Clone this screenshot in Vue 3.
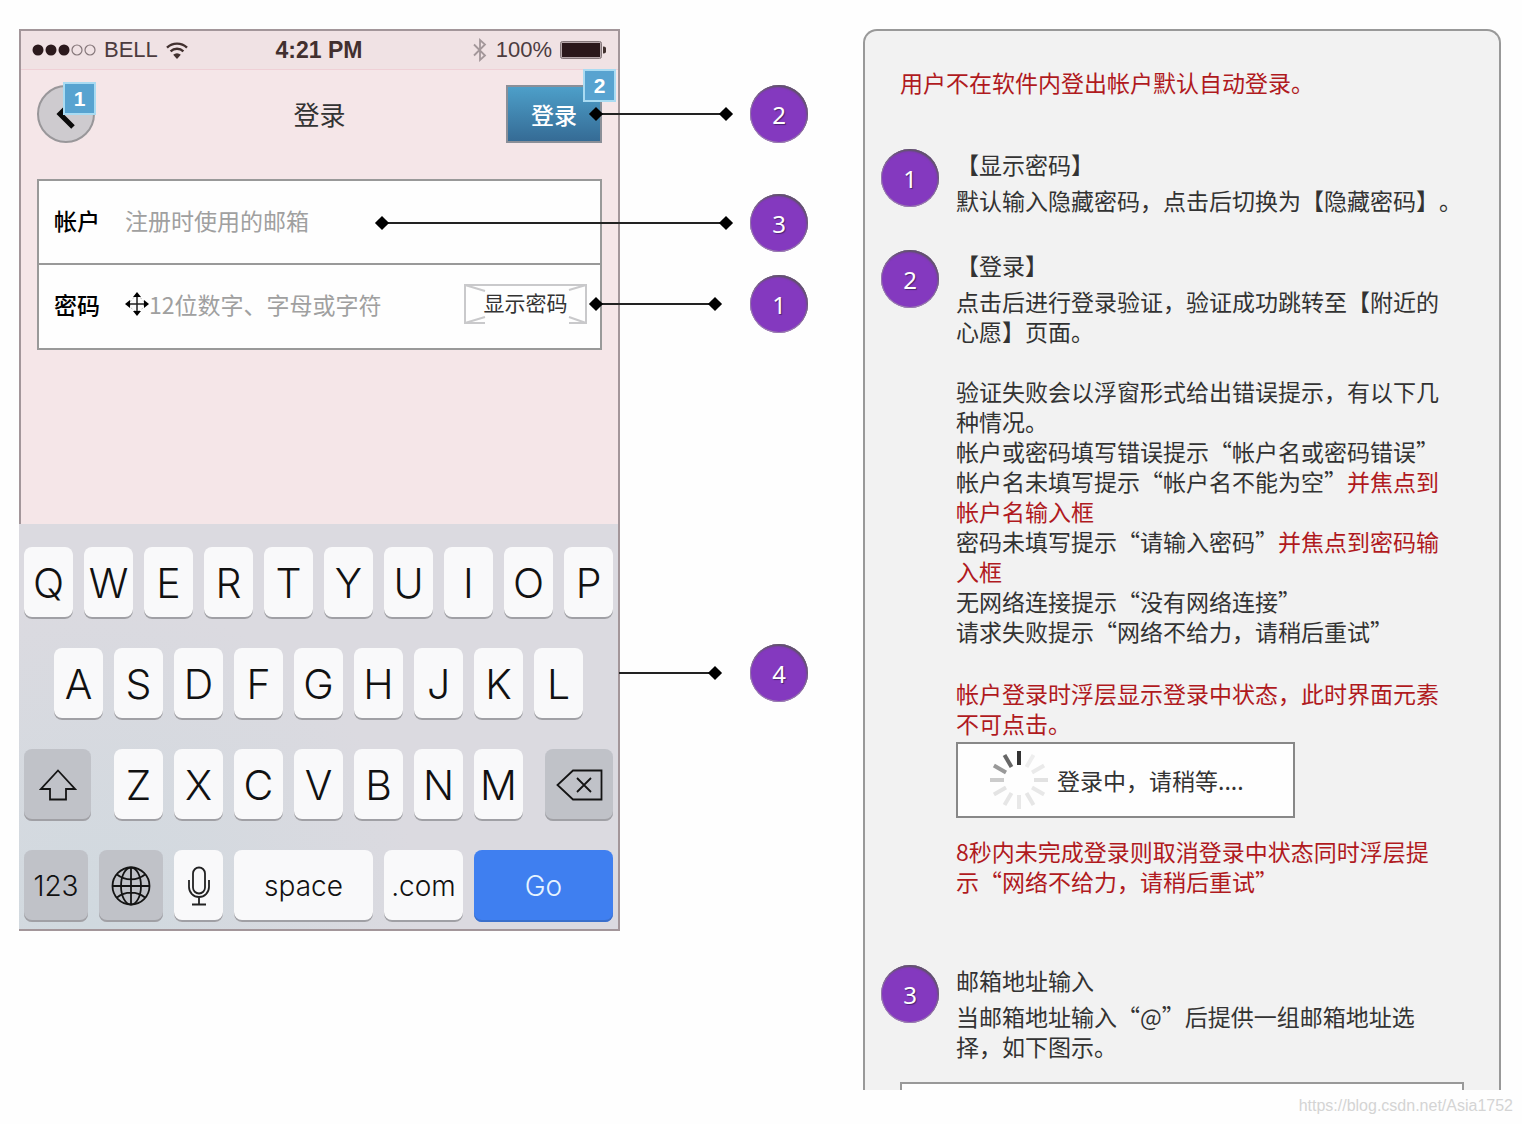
<script setup>
const callouts = [
  { label: '2', slot: 'to-login' },
  { label: '3', slot: 'to-account' },
  { label: '1', slot: 'to-reveal' },
  { label: '4', slot: 'to-keyboard' },
]
const topRow = 'QWERTYUIOP'.split('')
const homeRow = 'ASDFGHJKL'.split('')
const bottomRow = 'ZXCVBNM'.split('')
const spokes = ['#333', '#eee', '#eaeaea', '#e2e2e2', '#e8e8e8', '#e6e6e6', '#e8e8e8', '#e6e6e6', '#e4e4e4', '#ccc', '#999', '#666']
</script>

<template>
  <div class="page" lang="zh-CN">
    <main class="board">
      <section class="phone">
        <div class="status">
          <div class="status-left">
            <svg width="64" height="12" viewBox="0 0 64 12">
              <g fill="#2c1a1d">
                <circle cx="6" cy="6" r="5.500" /><circle cx="19" cy="6" r="5.500" /><circle cx="32" cy="6" r="5.500" />
              </g>
              <g fill="none" stroke="#85777a" stroke-width="1.2">
                <circle cx="45" cy="6" r="5" /><circle cx="58" cy="6" r="5" />
              </g>
            </svg>
            <span>BELL</span>
            <svg width="22" height="17" viewBox="0 0 22 17" fill="none" stroke="#42312f" stroke-width="2.4">
              <path d="M1 5.6a14.5 14.5 0 0 1 20 0M4.6 9.3a9.4 9.4 0 0 1 12.8 0" />
              <path d="M11 17l-3.8-4.2a5.5 5.5 0 0 1 7.6 0z" fill="#42312f" stroke="none" />
            </svg>
          </div>
          <strong class="time">4:21 PM</strong>
          <div class="status-right">
            <svg width="16" height="24" viewBox="0 0 16 24" fill="none" stroke="#a3979a" stroke-width="1.8">
              <path d="M2 6.5l11 11L8 22V2l5 4.5-11 11" />
            </svg>
            <span>100%</span>
            <svg width="46" height="18" viewBox="0 0 46 18">
              <rect x="0.5" y="0.5" width="41" height="17" rx="2" fill="#b5a6a9" stroke="#85777a" />
              <rect x="2" y="2" width="38" height="14" fill="#2a171a" />
              <path d="M43 5.500a3.500 3.500 0 0 1 0 7z" fill="#42312f" />
            </svg>
          </div>
        </div>

        <header class="nav">
          <button class="back" type="button" aria-label="返回">
            <svg width="20" height="30" viewBox="0 0 20 30" fill="none" stroke="#0b0b0b" stroke-width="5">
              <path d="M17 2L4 15l13 13" />
            </svg>
            <span class="badge">1</span>
          </button>
          <h1>登录</h1>
          <button class="login" type="button">登录<span class="badge">2</span></button>
        </header>

        <form class="fields" @submit.prevent>
          <div class="field">
            <label for="account">帐户</label>
            <input id="account" type="text" placeholder="注册时使用的邮箱" />
          </div>
          <div class="field">
            <label for="password">密码</label>
            <svg width="24" height="24" viewBox="0 0 24 24">
              <circle cx="12" cy="12" r="7" fill="none" stroke="#bbb" stroke-dasharray="2 2" />
              <path d="M12 3v18M3 12h18" stroke="#222" stroke-width="1.5" />
              <path d="M12 0l4 5H8zM12 24l4-5H8zM0 12l5-4v8zM24 12l-5-4v8z" fill="#000" />
            </svg>
            <input id="password" type="password" placeholder="12位数字、字母或字符" />
            <button class="reveal" type="button">
              <svg viewBox="0 0 123 40" fill="none" stroke="#c9c9cb" stroke-width="2">
                <path d="M21 39H1V1h121v38h-17M1 1l20 6M122 1l-17 5M1 39l20-6M122 39l-17-6" />
              </svg>
              显示密码
            </button>
          </div>
        </form>

        <div class="keyboard">
          <div class="row">
            <button v-for="k in topRow" :key="k" class="key" type="button">{{ k }}</button>
          </div>
          <div class="row home">
            <button v-for="k in homeRow" :key="k" class="key" type="button">{{ k }}</button>
          </div>
          <div class="row">
            <button class="key dark shift" type="button" aria-label="Shift">
              <svg width="38" height="32" viewBox="0 0 38 32" fill="none" stroke="#141414" stroke-width="1.8">
                <path d="M19 1.500L36 20h-9v10.500H11V20H2z" />
              </svg>
            </button>
            <button v-for="k in bottomRow" :key="k" class="key" type="button">{{ k }}</button>
            <button class="key dark delete" type="button" aria-label="Delete">
              <svg width="47" height="32" viewBox="0 0 47 32" fill="none" stroke="#141414" stroke-width="1.8">
                <path d="M17 1.500H45.500V30.500H17L1.500 16zM21 9l14 14M35 9L21 23" />
              </svg>
            </button>
          </div>
          <div class="row">
            <button class="key dark word mode" type="button">123</button>
            <button class="key dark mode" type="button" aria-label="Language">
              <svg width="40" height="40" viewBox="0 0 40 40" fill="none" stroke="#141414" stroke-width="1.8">
                <circle cx="20" cy="20" r="18.500" />
                <ellipse cx="20" cy="20" rx="10" ry="18.500" />
                <path d="M20 1.500v37M1.500 20h37M6 8.500c8 6.500 20 6.500 28 0M6 31.500c8-6.500 20-6.500 28 0" />
              </svg>
            </button>
            <button class="key" type="button" aria-label="Dictation">
              <svg width="24" height="40" viewBox="0 0 24 40" fill="none" stroke="#222" stroke-width="1.8">
                <rect x="6" y="1.500" width="12" height="26" rx="6" />
                <path d="M2 14v7a10 10 0 0 0 20 0v-7M12 31v7M5 38.500h14" />
              </svg>
            </button>
            <button class="key word space" type="button">space</button>
            <button class="key word com" type="button">.com</button>
            <button class="key word go" type="button">Go</button>
          </div>
        </div>
      </section>

      <ul class="callouts">
        <li v-for="c in callouts" :key="c.label" class="callout" :class="c.slot">
          <span class="connector" aria-hidden="true"></span>
          <span class="pin">{{ c.label }}</span>
        </li>
      </ul>

      <section class="notes">
        <p class="intro red">用户不在软件内登出帐户默认自动登录。</p>

        <article class="note">
          <span class="pin">1</span>
          <div>
            <h2>【显示密码】</h2>
            <p>默认输入隐藏密码，点击后切换为【隐藏密码】。</p>
          </div>
        </article>

        <article class="note">
          <span class="pin">2</span>
          <div>
            <h2>【登录】</h2>
            <p>点击后进行登录验证，验证成功跳转至【附近的<br />心愿】页面。</p>
            <p class="cases">
              验证失败会以浮窗形式给出错误提示，有以下几<br />种情况。<br />
              帐户或密码填写错误提示“帐户名或密码错误”<br />
              帐户名未填写提示“帐户名不能为空”<span class="red">并焦点到<br />帐户名输入框</span><br />
              密码未填写提示“请输入密码”<span class="red">并焦点到密码输<br />入框</span><br />
              无网络连接提示“没有网络连接”<br />
              请求失败提示“网络不给力，请稍后重试”
            </p>
            <p class="pending red">帐户登录时浮层显示登录中状态，此时界面元素<br />不可点击。</p>
            <div class="loading">
              <svg width="60" height="60" viewBox="-30 -30 60 60" stroke-width="4">
                <line v-for="(color, i) in spokes" :key="i" y1="-29" y2="-15" :stroke="color" :transform="`rotate(${i * 30})`" />
              </svg>
              <span>登录中，请稍等....</span>
            </div>
            <p class="timeout red">8秒内未完成登录则取消登录中状态同时浮层提<br />示“网络不给力，请稍后重试”</p>
          </div>
        </article>

        <article class="note last">
          <span class="pin">3</span>
          <div>
            <h2>邮箱地址输入</h2>
            <p>当邮箱地址输入“@”后提供一组邮箱地址选<br />择，如下图示。</p>
          </div>
        </article>
        <div class="figure"></div>
      </section>
    </main>
    <footer>https://blog.csdn.net/Asia1752</footer>
  </div>
</template>

<style>
body {
  margin: 0;
  background: #fefefe;
}
</style>

<style scoped>
* {
  box-sizing: border-box;
}
.page {
  font-family: "Noto Sans CJK SC", sans-serif;
  font-size: 23px;
  line-height: 30px;
  color: #333;
  text-spacing-trim: space-all;
}
h1, h2, p, ul {
  margin: 0;
  padding: 0;
  font-weight: 400;
  font-size: inherit;
}
button, input {
  font: inherit;
  color: inherit;
  padding: 0;
  margin: 0;
  border: 0;
  background: none;
}
svg {
  display: block;
  flex: none;
}
.board {
  display: grid;
  grid-template-columns: minmax(0, 601fr) 243px minmax(0, 638fr);
  align-items: start;
  padding: 29px 21px 0 19px;
}
.red {
  color: #b01a1e;
}

/* phone */
.phone {
  border: 2px solid #a3969a;
  background: #f5e6e8;
}
.status {
  display: grid;
  grid-template-columns: 1fr auto 1fr;
  align-items: center;
  height: 39px;
  padding: 0 12px 0 11px;
  border-bottom: 1px solid #efd0d6;
  background: #f0e2e4;
  font-family: "Liberation Sans", Arial, sans-serif;
  font-size: 22px;
  color: #4c3c3f;
}
.status-left, .status-right {
  display: flex;
  align-items: center;
  gap: 8px;
}
.status-right {
  justify-content: flex-end;
}
.time {
  color: #42302f;
  font-size: 23px;
}
.nav {
  display: grid;
  grid-template-columns: 1fr auto 1fr;
  align-items: center;
  padding: 15px 16px 36px;
}
h1 {
  font-size: 26px;
}
.back {
  position: relative;
  display: flex;
  align-items: center;
  justify-content: center;
  width: 58px;
  height: 58px;
  border: 2px solid #99979a;
  border-radius: 50%;
  background: #cecbcf;
}
.login {
  position: relative;
  justify-self: end;
  width: 96px;
  height: 58px;
  border: 2px solid #8a8f98;
  background: linear-gradient(#4d9fc9, #356b95);
  color: #fff;
  font-weight: 500;
}
.badge {
  position: absolute;
  width: 33px;
  height: 33px;
  border: 2px solid #a9dbf2;
  background: #58a3d0;
  color: #fff;
  font: 700 21px/29px "Liberation Sans", Arial, sans-serif;
  text-align: center;
}
.back .badge {
  top: -5px;
  right: -3px;
}
.login .badge {
  top: -18px;
  right: -16px;
}
.fields {
  margin: 0 16px;
  border: 2px solid #999;
  background: #fefefe;
}
.field {
  display: flex;
  align-items: center;
  height: 82px;
  padding: 0 13px 5px 15px;
}
.field + .field {
  height: 85px;
  border-top: 2px solid #999;
}
.field label {
  width: 71px;
  color: #000;
  font-weight: 500;
}
.field input {
  flex: 1;
  min-width: 0;
  height: 40px;
  outline: none;
}
.field input::placeholder {
  color: #a0a0a0;
  opacity: 1;
}
.reveal {
  position: relative;
  width: 123px;
  height: 40px;
  padding-bottom: 4px;
  font-size: 21px;
}
.reveal svg {
  position: absolute;
  inset: 0;
}

/* keyboard */
.keyboard {
  display: flex;
  flex-direction: column;
  gap: 29px;
  margin: 174px 0 0 -2px;
  padding: 23px 5px 7px;
  background: radial-gradient(circle at 12% 100%, #d0d9df, #dbdae0 50%);
}
.row {
  display: flex;
  gap: 11px;
}
.home {
  padding: 0 30px;
}
.key {
  display: flex;
  flex: 49 1 0;
  align-items: center;
  justify-content: center;
  min-width: 0;
  height: 72px;
  border-radius: 8px;
  background: #f9f9fa;
  box-shadow: inset 0 -2px 0 #a0a0a5;
  color: #111;
  font-family: Inter, "Liberation Sans", sans-serif;
  font-weight: 300;
  font-size: 41px;
}
.dark {
  background: #c0c2c8;
}
.shift {
  flex-grow: 67;
  margin-right: 12px;
}
.delete {
  flex-grow: 68;
  margin-left: 11px;
}
.word {
  font-size: 28px;
}
.mode {
  flex-grow: 64;
}
.space, .go {
  flex-grow: 139;
}
.com {
  flex-grow: 79;
}
.go {
  background: #3f7ff0;
  box-shadow: inset 0 -2px 0 #3a6fcb;
  color: #e6f4ff;
}

/* numbered markers and their leader lines */
.pin {
  flex: none;
  width: 58px;
  height: 58px;
  border-radius: 50%;
  background: #8439bf;
  box-shadow: inset -1px 2px 2px #5d5265, inset 0 0 0 1px #9a80ad;
  color: #fff;
  font: 24px/60px "Noto Sans", "Open Sans", sans-serif;
  text-align: center;
  text-shadow: 1px 1px 1px #4b2470;
}
.callouts {
  position: relative;
  list-style: none;
}
.callout {
  position: absolute;
  left: 130px;
  display: flex;
}
.to-login {
  top: 56px;
}
.to-account {
  top: 165px;
}
.to-reveal {
  top: 246px;
}
.to-keyboard {
  top: 615px;
}
.connector {
  position: absolute;
  top: 28px;
  right: 82px;
  width: 130px;
  height: 2px;
  background: #222;
}
.to-account .connector {
  width: 344px;
}
.to-reveal .connector {
  right: 93px;
  width: 119px;
}
.to-keyboard .connector {
  right: 93px;
  width: 96px;
}
.connector::before, .connector::after {
  content: "";
  position: absolute;
  top: -4px;
  width: 10px;
  height: 10px;
  background: #000;
  transform: rotate(45deg);
}
.connector::before {
  left: -5px;
}
.connector::after {
  right: -5px;
}
.to-keyboard .connector::before {
  display: none;
}

/* notes */
.notes {
  padding: 36px 16px 0;
  border: 2px solid #999;
  border-bottom: 0;
  border-radius: 14px 14px 0 0;
  background: #f2f2f2;
}
.intro {
  margin: 0 0 52px 19px;
}
.note {
  display: flex;
  gap: 17px;
  margin-bottom: 35px;
  white-space: nowrap;
}
h2 {
  margin-bottom: 6px;
}
.cases {
  margin-top: 30px;
}
.pending {
  margin-top: 32px;
}
.loading {
  display: flex;
  align-items: center;
  gap: 8px;
  width: 339px;
  height: 76px;
  margin-top: 4px;
  padding-left: 31px;
  border: 2px solid #888;
  background: #fefefe;
}
.timeout {
  margin-top: 18px;
}
.last {
  margin: 69px 0 21px;
}
.figure {
  height: 8px;
  margin: 0 19px;
  border: 2px solid #999;
  border-bottom: 0;
  background: #fefefe;
}
footer {
  padding: 1px 9px 0;
  color: #d4d4d4;
  font-family: "Liberation Sans", Arial, sans-serif;
  font-size: 16px;
  text-align: right;
}
</style>
